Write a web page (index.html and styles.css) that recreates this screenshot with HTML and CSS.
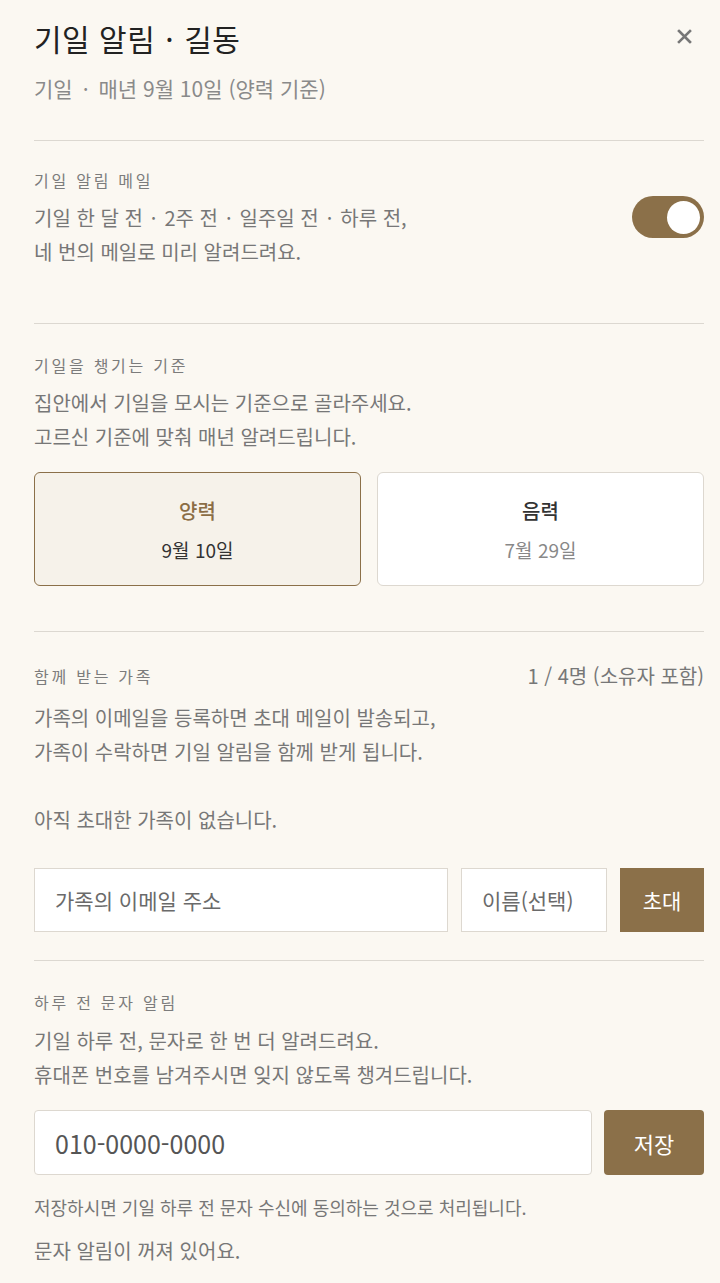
FILE: index.html
```html
<!DOCTYPE html>
<html lang="ko">
<head>
  <meta charset="UTF-8" />
  <meta name="viewport" content="width=device-width, initial-scale=1.0"/>
  <title>기일 알림</title>
  <link rel="stylesheet" href="styles.css">
</head>
<body>

  <div class="sheet">
    <!-- Header -->
    <div class="header">
      <div class="header-top">
        <h1 class="title">기일 알림<span class="dot">·</span>길동</h1>
        <button class="close-btn" aria-label="닫기">
          <svg width="15" height="15" viewBox="0 0 15 15"><path d="M2 2L13 13M13 2L2 13" stroke="#777" stroke-width="2.6" stroke-linecap="square"/></svg>
        </button>
      </div>
      <p class="subtitle">기일<span class="dot">·</span>매년 9월 10일 (양력 기준)</p>
    </div>

    <!-- Email alerts -->
    <div class="section section-mail">
      <div class="mail-row">
        <div>
          <div class="label">기일 알림 메일</div>
          <p class="desc">기일 한 달 전<span class="dot">·</span>2주 전<span class="dot">·</span>일주일 전<span class="dot">·</span>하루 전,<br>네 번의 메일로 미리 알려드려요.</p>
        </div>
        <div class="toggle on"><span class="knob"></span></div>
      </div>
    </div>

    <!-- Calendar basis -->
    <div class="section section-basis">
      <div class="label">기일을 챙기는 기준</div>
      <p class="desc">집안에서 기일을 모시는 기준으로 골라주세요.<br>고르신 기준에 맞춰 매년 알려드립니다.</p>
      <div class="choices">
        <div class="choice selected">
          <div class="choice-name">양력</div>
          <div class="choice-date">9월 10일</div>
        </div>
        <div class="choice">
          <div class="choice-name">음력</div>
          <div class="choice-date">7월 29일</div>
        </div>
      </div>
    </div>

    <!-- Family -->
    <div class="section section-family">
      <div class="label-row">
        <div class="label">함께 받는 가족</div>
        <div class="count">1 / 4명 (소유자 포함)</div>
      </div>
      <p class="desc">가족의 이메일을 등록하면 초대 메일이 발송되고,<br>가족이 수락하면 기일 알림을 함께 받게 됩니다.</p>
      <p class="desc empty">아직 초대한 가족이 없습니다.</p>
      <div class="invite-row">
        <input class="field email" type="email" placeholder="가족의 이메일 주소">
        <input class="field name" type="text" placeholder="이름(선택)">
        <button class="btn invite">초대</button>
      </div>
    </div>

    <!-- SMS -->
    <div class="section section-sms">
      <div class="label">하루 전 문자 알림</div>
      <p class="desc">기일 하루 전, 문자로 한 번 더 알려드려요.<br>휴대폰 번호를 남겨주시면 잊지 않도록 챙겨드립니다.</p>
      <div class="phone-row">
        <input class="field phone" type="tel" placeholder="010-0000-0000">
        <button class="btn save">저장</button>
      </div>
      <p class="note">저장하시면 기일 하루 전 문자 수신에 동의하는 것으로 처리됩니다.</p>
      <p class="status">문자 알림이 꺼져 있어요.</p>
    </div>
  </div>

</body>
</html>
```

FILE: styles.css
```css
body {
  margin: 0;
  background-color: #fbf8f2;
  font-family: "Noto Sans CJK KR", "Noto Sans", sans-serif;
  color: #777;
}

p {
  margin: 0;
}

.sheet {
  padding: 18px 16px 0 34px;
}

.dot {
  margin: 0 8px;
}

/* Header */
.header {
  padding-bottom: 37px;
}

.header-top {
  display: flex;
  justify-content: space-between;
  align-items: center;
}

.title {
  margin: 0;
  font-size: 30px;
  font-weight: 400;
  line-height: 40px;
  letter-spacing: 0.5px;
  color: #222;
}

.title .dot {
  margin: 0 10px;
}

.close-btn {
  width: 40px;
  height: 40px;
  border: none;
  background: none;
  padding: 0;
  display: flex;
  align-items: center;
  justify-content: center;
  margin-top: -4px;
  cursor: pointer;
}

.subtitle {
  margin-top: 15px;
  font-size: 21px;
  line-height: 30px;
  color: #8a8a8a;
}

.subtitle .dot {
  margin: 0 10px;
}

/* Sections */
.section {
  border-top: 1px solid #dcd8d1;
  padding-top: 29px;
}

.section-mail { padding-top: 27px; padding-bottom: 54px; }
.section-basis { padding-bottom: 45px; }
.section-family { padding-top: 32px; padding-bottom: 28px; }
.section-sms { padding-bottom: 20px; }

.label {
  font-size: 16px;
  line-height: 24px;
  letter-spacing: 2.75px;
  color: #7c7c7c;
}

.desc {
  margin-top: 9px;
  font-size: 20px;
  line-height: 34px;
  color: #777;
}

.section-family .desc {
  margin-top: 13px;
}

.section-sms .desc {
  margin-top: 10px;
}

.section-family .desc.empty {
  margin-top: 34px;
}

/* Toggle */
.mail-row {
  display: flex;
  justify-content: space-between;
  align-items: flex-start;
}

.toggle {
  position: relative;
  width: 72px;
  height: 42px;
  margin-top: 28px;
  border-radius: 21px;
  background-color: #ccc;
  flex-shrink: 0;
}

.toggle.on {
  background-color: #8b7049;
}

.knob {
  position: absolute;
  top: 4.5px;
  right: 4px;
  width: 33px;
  height: 33px;
  border-radius: 50%;
  background-color: #fff;
}

/* Basis choices */
.choices {
  display: grid;
  grid-template-columns: 1fr 1fr;
  gap: 16px;
  margin-top: 18px;
}

.choice {
  height: 114px;
  box-sizing: border-box;
  padding-top: 24px;
  text-align: center;
  background-color: #fff;
  border: 1px solid #ddd8d0;
  border-radius: 6px;
}

.choice.selected {
  background-color: #f6f2ea;
  border-color: #8b7049;
}

.choice-name {
  font-size: 20px;
  font-weight: 500;
  line-height: 28px;
  color: #333;
}

.choice.selected .choice-name {
  color: #8b6d45;
}

.choice-date {
  margin-top: 11px;
  font-size: 19px;
  line-height: 28px;
  color: #888;
}

.choice.selected .choice-date {
  color: #333;
}

/* Family */
.label-row {
  display: flex;
  justify-content: space-between;
  align-items: center;
}

.count {
  font-size: 20px;
  line-height: 24px;
  color: #777;
}

.invite-row {
  display: flex;
  gap: 13px;
  margin-top: 31px;
}

.field {
  height: 64px;
  box-sizing: border-box;
  padding: 0 20px;
  border: 1px solid #ddd8d0;
  background-color: #fff;
  font-family: inherit;
  font-size: 21px;
  color: #333;
  outline: none;
  min-width: 0;
}

.field::placeholder {
  color: #6a6a6a;
}

.field.email { flex: 1; }
.field.name { width: 146px; flex-shrink: 0; }

.btn {
  border: none;
  background-color: #8b7049;
  color: #fff;
  font-family: inherit;
  font-size: 21px;
  cursor: pointer;
  flex-shrink: 0;
}

.btn.invite {
  width: 84px;
  height: 64px;
}

/* SMS */
.phone-row {
  display: flex;
  gap: 12px;
  margin-top: 18px;
}

.field.phone {
  flex: 1;
  height: 65px;
  border-radius: 4px;
  font-size: 25px;
}

.field.phone::placeholder {
  color: #555;
}

.btn.save {
  width: 100px;
  height: 65px;
  border-radius: 4px;
  font-size: 22px;
}

.note {
  margin-top: 20px;
  font-size: 18px;
  line-height: 24px;
  color: #777;
}

.status {
  margin-top: 20px;
  font-size: 20px;
  line-height: 24px;
  color: #777;
}
```
